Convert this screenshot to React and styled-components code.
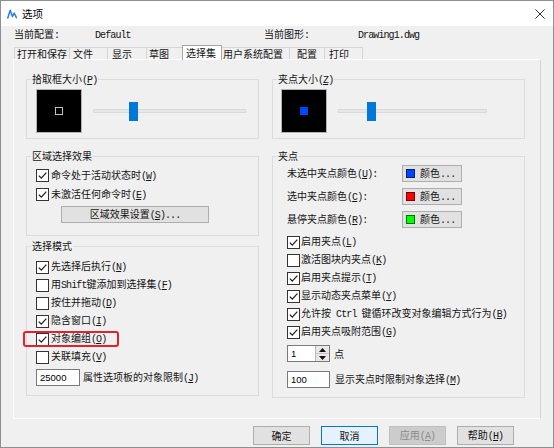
import React from 'react';
import styled, { createGlobalStyle } from 'styled-components';

const GlobalStyle = createGlobalStyle`
  html, body { margin: 0; padding: 0; background: #f0f0f0; }
  body {
    font-family: "Noto Sans CJK SC", "Liberation Sans", sans-serif;
    font-size: 10px;
    line-height: 12px;
    color: #141414;
  }
  * { box-sizing: border-box; }
`;

const CJK = /[\u2E80-\u9FFF\uF900-\uFAFF\uFF00-\uFFEF\u3000-\u303F]/;

const Cjk = styled.span`
  font-family: "Noto Sans CJK SC", sans-serif;
  font-size: 10px;
`;

const Lat = styled.span`
  font-family: "Liberation Mono", monospace;
  font-size: 10px;
  letter-spacing: -0.9px;
  white-space: pre;
`;

function underline(t) {
  return t.split(/(\([A-Z]\))/).map((p, i) =>
    /^\([A-Z]\)$/.test(p) ? (
      <React.Fragment key={i}>(<u>{p[1]}</u>)</React.Fragment>
    ) : (
      p
    )
  );
}

function Txt({ children }) {
  const s = String(children);
  const runs = [];
  let cur = '';
  let curCjk = null;
  for (const ch of s) {
    const c = CJK.test(ch);
    if (curCjk === null || c === curCjk) {
      cur += ch;
      curCjk = c;
    } else {
      runs.push([cur, curCjk]);
      cur = ch;
      curCjk = c;
    }
  }
  if (cur) runs.push([cur, curCjk]);
  return runs.map(([t, c], i) =>
    c ? <Cjk key={i}>{t}</Cjk> : <Lat key={i}>{underline(t)}</Lat>
  );
}

/* ---------- window chrome ---------- */
const Window = styled.div`
  width: 554px;
  height: 448px;
  border: 1px solid #8f8f8f;
  background: #f0f0f0;
  display: flex;
  flex-direction: column;
  overflow: hidden;
`;

const TitleBar = styled.div`
  flex: none;
  height: 25px;
  background: #fff;
  display: flex;
  align-items: center;
  padding: 0 8px 0 6px;
`;

const TitleText = styled.div`
  flex: 1;
  margin-left: 5px;
  font-size: 10.5px;
  color: #000;
`;

const Body = styled.div`
  flex: 1;
  display: flex;
  flex-direction: column;
  padding: 0 12px;
`;

const InfoRow = styled.div`
  margin-top: 3px;
  height: 12px;
  display: flex;
  align-items: center;
  padding-left: 1px;
`;

const InfoCell = styled.div`
  width: ${(p) => p.$w}px;
  white-space: nowrap;
`;

const TabStrip = styled.div`
  margin-top: 4px;
  height: 14px;
  display: flex;
  align-items: flex-end;
  padding-left: 1px;
  position: relative;
  z-index: 1;
`;

const Tab = styled.div`
  flex: none;
  width: ${(p) => p.$w}px;
  height: ${(p) => (p.$sel ? 15 : 12)}px;
  margin-bottom: ${(p) => (p.$sel ? -1 : 0)}px;
  margin-left: ${(p) => (p.$sel ? -1 : 0)}px;
  padding-left: ${(p) => p.$pl}px;
  display: flex;
  align-items: center;
  white-space: nowrap;
  background: ${(p) => (p.$sel ? '#fff' : '#f0f0f0')};
  border: 1px solid ${(p) => (p.$sel ? '#a5a5a5' : '#d5d5d5')};
  border-bottom: none;
  border-left-color: ${(p) => (p.$sel || p.$first ? (p.$sel ? '#a5a5a5' : '#d5d5d5') : 'transparent')};
  border-left-width: ${(p) => (p.$sel || p.$first ? 1 : 0)}px;
`;

const Panel = styled.div`
  flex: none;
  height: 360px;
  border: 1px solid;
  border-color: #ffffff #d3d3d3 #ffffff #ffffff;
  padding: 13px 15px 0 12px;
  display: flex;
  gap: 13px;
  align-items: flex-start;
`;

const Column = styled.div`
  flex: none;
  width: ${(p) => p.$w}px;
  display: flex;
  flex-direction: column;
`;

/* ---------- group boxes ---------- */
const Group = styled.fieldset`
  margin: ${(p) => p.$mt || 0}px 0 0 0;
  padding: 0;
  min-width: 0;
  border: 1px solid #dcdcdc;
`;

const Legend = styled.legend`
  margin-left: 4px;
  padding: 0 1px;
  line-height: 12px;
  height: 12px;
  font-size: 10px;
`;

const GroupBody = styled.div`
  padding: ${(p) => p.$pad};
  display: flex;
  flex-direction: ${(p) => (p.$row ? 'row' : 'column')};
  align-items: ${(p) => (p.$row ? 'center' : 'stretch')};
`;

/* size previews and sliders */
const Preview = styled.div`
  flex: none;
  width: 46px;
  height: 44px;
  background: #000;
  border: 1px solid #b4b4b4;
  display: flex;
  align-items: center;
  justify-content: center;
`;

const PickSquare = styled.div`
  width: 8px;
  height: 8px;
  border: 1px solid #c4c4c4;
`;

const GripSquare = styled.div`
  width: 8px;
  height: 8px;
  background: #0048ff;
`;

const Slider = styled.div`
  position: relative;
  margin-left: 11px;
  height: 19px;
  display: flex;
  align-items: center;
  ${(p) => (p.$w ? `width: ${p.$w}px; flex: none;` : 'flex: 1;')}
`;

const Track = styled.div`
  width: 100%;
  height: 4px;
  background: #e7e7e7;
  border: 1px solid #d9d9d9;
`;

const Thumb = styled.div`
  position: absolute;
  top: 0;
  width: 9px;
  height: 19px;
  background: #0078d7;
`;

/* checkboxes */
const CheckRow = styled.div`
  position: relative;
  display: flex;
  align-items: center;
  gap: ${(p) => p.$gap ?? 2}px;
  height: ${(p) => p.$h}px;
  white-space: nowrap;
`;

const Box = styled.span`
  flex: none;
  width: 13px;
  height: 13px;
  background: #fff;
  border: 1px solid #333;
  display: flex;
  align-items: center;
  justify-content: center;
`;

const Highlight = styled.span`
  position: absolute;
  left: -13px;
  top: 1px;
  width: 96px;
  height: 16px;
  border: 2px solid #e5202e;
  border-radius: 3px;
  pointer-events: none;
`;

function Check({ checked, label, h, gap, highlight }) {
  return (
    <CheckRow $h={h} $gap={gap}>
      <Box>
        {checked && (
          <svg width="11" height="11" viewBox="0 0 11 11">
            <polyline
              points="1.8,5.6 4.3,8.1 9.3,2.6"
              fill="none"
              stroke="#222"
              strokeWidth="1.3"
            />
          </svg>
        )}
      </Box>
      <span>
        <Txt>{label}</Txt>
      </span>
      {highlight && <Highlight />}
    </CheckRow>
  );
}

/* buttons */
const GrayButton = styled.div`
  width: ${(p) => p.$w}px;
  height: 17px;
  margin: ${(p) => p.$m || 0};
  background: #e1e1e1;
  border: 1px solid #adadad;
  display: flex;
  align-items: center;
  justify-content: center;
  white-space: nowrap;
`;

const ColorRows = styled.div`
  display: flex;
  flex-direction: column;
  gap: 6px;
`;

const ColorRow = styled.div`
  display: grid;
  grid-template-columns: 115px 60px;
  align-items: center;
  height: 17px;
  white-space: nowrap;
`;

const ColorButton = styled.div`
  height: 17px;
  background: #e1e1e1;
  border: 1px solid #adadad;
  display: flex;
  align-items: center;
  gap: 5px;
  padding-left: 3px;
  white-space: nowrap;
`;

const Swatch = styled.span`
  flex: none;
  width: 9px;
  height: 9px;
  background: ${(p) => p.$c};
  border: 1px solid rgba(0, 0, 0, 0.55);
`;

const CheckList = styled.div`
  margin-top: ${(p) => p.$mt || 0}px;
  display: flex;
  flex-direction: column;
`;

const FieldRow = styled.div`
  display: flex;
  align-items: center;
  gap: ${(p) => p.$gap}px;
  margin-top: ${(p) => p.$mt}px;
  height: 17px;
  white-space: nowrap;
`;

const NumBox = styled.div`
  flex: none;
  width: ${(p) => p.$w}px;
  height: 17px;
  background: #fff;
  border: 1px solid #7a7a7a;
  padding-left: 3px;
  display: flex;
  align-items: center;
  font-family: "Liberation Sans", Arial, sans-serif;
  font-size: 9.5px;
  color: #000;
`;

const Spin = styled.div`
  flex: none;
  width: 43px;
  height: 17px;
  border: 1px solid #7a7a7a;
  background: #fff;
  display: flex;
`;

const SpinValue = styled.div`
  flex: 1;
  padding-left: 3px;
  display: flex;
  align-items: center;
  font-family: "Liberation Sans", Arial, sans-serif;
  font-size: 9.5px;
  color: #000;
`;

const SpinButtons = styled.div`
  flex: none;
  width: 14px;
  display: flex;
  flex-direction: column;
  border-left: 1px solid #b9b9b9;
`;

const SpinButton = styled.div`
  flex: 1;
  background: #e8e8e8;
  display: flex;
  align-items: center;
  justify-content: center;
  & + & { border-top: 1px solid #c4c4c4; }
`;

/* bottom buttons */
const ButtonRow = styled.div`
  margin-top: 7px;
  height: 19px;
  display: flex;
  justify-content: flex-end;
  gap: 11px;
  padding-right: 27px;
`;

const DlgButton = styled.div`
  width: 57px;
  height: 19px;
  display: flex;
  align-items: center;
  justify-content: center;
  white-space: nowrap;
  background: ${(p) => (p.$v === 'focus' ? '#e5f1fb' : p.$v === 'off' ? '#cccccc' : '#e1e1e1')};
  border: 1px solid ${(p) => (p.$v === 'focus' ? '#0078d7' : p.$v === 'off' ? '#bfbfbf' : '#adadad')};
  color: ${(p) => (p.$v === 'off' ? '#8a8a8a' : '#141414')};
`;

const tabs = [
  { t: '打开和保存', w: 56, pl: 2 },
  { t: '文件', w: 38, pl: 3 },
  { t: '显示', w: 39, pl: 4 },
  { t: '草图', w: 36, pl: 2 },
  { t: '选择集', w: 40, pl: 3, sel: true },
  { t: '用户系统配置', w: 68, pl: 1 },
  { t: '配置', w: 35, pl: 7 },
  { t: '打印', w: 38, pl: 4 },
];

export default function App() {
  return (
    <>
      <GlobalStyle />
      <Window>
        <TitleBar>
          <svg width="10" height="10" viewBox="0 0 10 10">
            <path
              d="M0.8 9 L3.2 1.2 L5.4 7.6 L7.2 4 L9.4 8.6"
              fill="none"
              stroke="#2b7de0"
              strokeWidth="1.5"
              strokeLinejoin="round"
              strokeLinecap="round"
            />
          </svg>
          <TitleText>选项</TitleText>
          <svg width="10" height="10" viewBox="0 0 10 10">
            <path d="M0.5 0.5 L9.5 9.5 M9.5 0.5 L0.5 9.5" stroke="#333" strokeWidth="1" />
          </svg>
        </TitleBar>
        <Body>
          <InfoRow>
            <InfoCell $w={81}><Txt>当前配置:</Txt></InfoCell>
            <InfoCell $w={169}><Txt>Default</Txt></InfoCell>
            <InfoCell $w={94}><Txt>当前图形:</Txt></InfoCell>
            <InfoCell $w={120}><Txt>Drawing1.dwg</Txt></InfoCell>
          </InfoRow>
          <TabStrip>
            {tabs.map((tb, i) => (
              <Tab key={tb.t} $w={tb.w} $pl={tb.pl} $sel={tb.sel} $first={i === 0}>
                {tb.t}
              </Tab>
            ))}
          </TabStrip>
          <Panel>
            <Column $w={233}>
              <Group>
                <Legend><Txt>拾取框大小(P)</Txt></Legend>
                <GroupBody $row $pad="4px 12px 5px 9px">
                  <Preview><PickSquare /></Preview>
                  <Slider>
                    <Track />
                    <Thumb style={{ left: 36 }} />
                  </Slider>
                </GroupBody>
              </Group>
              <Group $mt={11}>
                <Legend>区域选择效果</Legend>
                <GroupBody $pad="4px 0 12px 9px">
                  <Check h={19} checked label="命令处于活动状态时(W)" />
                  <Check h={19} checked label="未激活任何命令时(E)" />
                  <GrayButton $w={148} $m="2px 0 0 25px">
                    <span><Txt>区域效果设置(S)...</Txt></span>
                  </GrayButton>
                </GroupBody>
              </Group>
              <Group $mt={4}>
                <Legend>选择模式</Legend>
                <GroupBody $pad="6px 0 9px 9px">
                  <Check h={18} checked label="先选择后执行(N)" />
                  <Check h={18} label="用Shift键添加到选择集(F)" />
                  <Check h={18} label="按住并拖动(D)" />
                  <Check h={18} checked label="隐含窗口(I)" />
                  <Check h={18} checked highlight label="对象编组(O)" />
                  <Check h={18} label="关联填充(V)" />
                  <FieldRow $gap={3} $mt={3}>
                    <NumBox $w={44}>25000</NumBox>
                    <span><Txt>属性选项板的对象限制(J)</Txt></span>
                  </FieldRow>
                </GroupBody>
              </Group>
            </Column>
            <Column $w={253}>
              <Group>
                <Legend><Txt>夹点大小(Z)</Txt></Legend>
                <GroupBody $row $pad="4px 12px 5px 8px">
                  <Preview><GripSquare /></Preview>
                  <Slider $w={149}>
                    <Track />
                    <Thumb style={{ left: 29 }} />
                  </Slider>
                </GroupBody>
              </Group>
              <Group $mt={11}>
                <Legend>夹点</Legend>
                <GroupBody $pad="3px 0 9px 14px">
                  <ColorRows>
                    {[
                      ['未选中夹点颜色(U):', '#0044ff'],
                      ['选中夹点颜色(C):', '#ff0000'],
                      ['悬停夹点颜色(R):', '#00ff00'],
                    ].map(([l, c]) => (
                      <ColorRow key={l}>
                        <span><Txt>{l}</Txt></span>
                        <ColorButton>
                          <Swatch $c={c} />
                          <span><Txt>颜色...</Txt></span>
                        </ColorButton>
                      </ColorRow>
                    ))}
                  </ColorRows>
                  <CheckList $mt={5}>
                    <Check h={18} gap={1} checked label="启用夹点(L)" />
                    <Check h={18} gap={1} label="激活图块内夹点(K)" />
                    <Check h={18} gap={1} checked label="启用夹点提示(T)" />
                    <Check h={18} gap={1} checked label="显示动态夹点菜单(Y)" />
                    <Check h={18} gap={1} checked label="允许按 Ctrl 键循环改变对象编辑方式行为(B)" />
                    <Check h={18} gap={1} checked label="启用夹点吸附范围(G)" />
                  </CheckList>
                  <FieldRow $gap={4} $mt={4}>
                    <Spin>
                      <SpinValue>1</SpinValue>
                      <SpinButtons>
                        <SpinButton>
                          <svg width="7" height="4" viewBox="0 0 7 4"><path d="M0 4 L3.5 0 L7 4 Z" fill="#111" /></svg>
                        </SpinButton>
                        <SpinButton>
                          <svg width="7" height="4" viewBox="0 0 7 4"><path d="M0 0 L3.5 4 L7 0 Z" fill="#111" /></svg>
                        </SpinButton>
                      </SpinButtons>
                    </Spin>
                    <span>点</span>
                  </FieldRow>
                  <FieldRow $gap={5} $mt={9}>
                    <NumBox $w={43}>100</NumBox>
                    <span><Txt>显示夹点时限制对象选择(M)</Txt></span>
                  </FieldRow>
                </GroupBody>
              </Group>
            </Column>
          </Panel>
          <ButtonRow>
            <DlgButton>确定</DlgButton>
            <DlgButton $v="focus">取消</DlgButton>
            <DlgButton $v="off"><span><Txt>应用(A)</Txt></span></DlgButton>
            <DlgButton><span><Txt>帮助(H)</Txt></span></DlgButton>
          </ButtonRow>
        </Body>
      </Window>
    </>
  );
}
